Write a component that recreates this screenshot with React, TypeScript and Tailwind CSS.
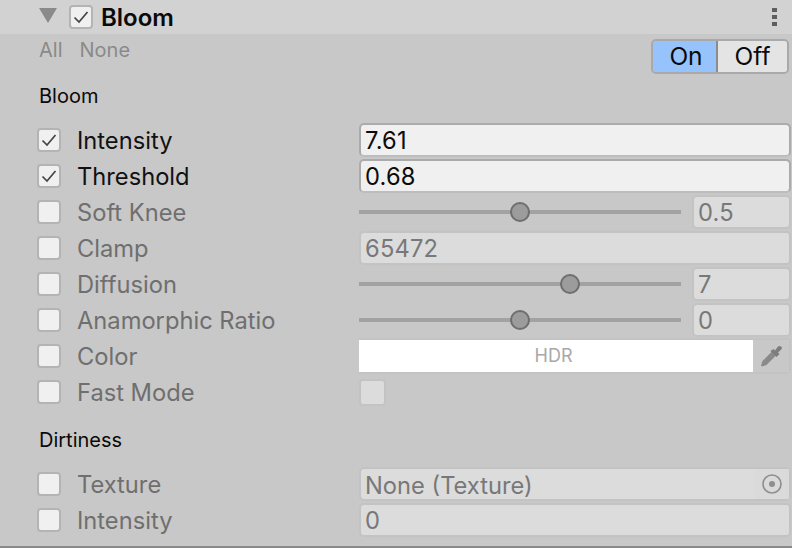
import React from "react";

const font = { fontFamily: "Inter, sans-serif" };

function Check({ on, size = "w-[24px] h-[24px]" }: { on?: boolean; size?: string }) {
  return (
    <div className={`${size} shrink-0 rounded-[4px] border-2 border-[#b4b4b4] bg-[#f0f0f0] flex items-center justify-center`}>
      {on && (
        <svg width="16" height="14" viewBox="0 0 16 14" fill="none">
          <path d="M1.5 7.5 L6 12 L14.5 2" stroke="#444" strokeWidth="1.7" />
        </svg>
      )}
    </div>
  );
}

function Row({ on, label, children }: { on?: boolean; label: string; children: React.ReactNode }) {
  return (
    <div className="h-[36px] flex items-center pl-[37px] pr-[1px]">
      <Check on={on} />
      <div className={`w-[298px] pl-[16px] pt-[2px] text-[23.7px] leading-[36px] shrink-0 ${on ? "text-[#111111]" : "text-[#6f6f6f]"}`}>{label}</div>
      <div className="flex-1 min-w-0 flex items-center">{children}</div>
    </div>
  );
}

function Field({ value, active, className = "" }: { value: string; active?: boolean; className?: string }) {
  return (
    <div
      className={`h-[34px] rounded-[5px] pl-[4px] text-[23.7px] tracking-[0.2px] leading-[31px] border-2 ${
        active ? "bg-[#f0f0f0] border-[#ababab] border-b-[#bdbdbd] text-[#0c0c0c]" : "bg-[#dcdcdc] border-[#c3c3c3] text-[#787878]"
      } ${className}`}
    >
      {value}
    </div>
  );
}

function Slider({ value, pos }: { value: string; pos: string }) {
  return (
    <>
      <div className="relative w-[322px] h-[4px] bg-[#a2a2a2] shrink-0">
        <div className={`absolute top-[-8px] ${pos} w-[20px] h-[20px] rounded-full bg-[#9c9c9c] border-2 border-[#6e6e6e]`} />
      </div>
      <Field value={value} className="ml-[11px] flex-1" />
    </>
  );
}

export default function App() {
  return (
    <div style={font} className="w-[792px] h-[548px] bg-[#c8c8c8] flex flex-col overflow-hidden">
      <div className="h-[34px] shrink-0 bg-[#d2d2d2] flex items-center pl-[39px] pr-[15px]">
        <svg width="18" height="15" viewBox="0 0 18 15" className="shrink-0 mb-[4px]">
          <path d="M0 0 H18 L9 15 Z" fill="#8a8a8a" />
        </svg>
        <div className="ml-[12px]">
          <Check on />
        </div>
        <div className="ml-[8px] pt-[2px] text-[24px] font-semibold text-[#0a0a0a] leading-[34px]">Bloom</div>
        <div className="ml-auto flex flex-col gap-[3px]">
          <div className="w-[5px] h-[4px] bg-[#5e5e5e]" />
          <div className="w-[5px] h-[4px] bg-[#5e5e5e]" />
          <div className="w-[5px] h-[4px] bg-[#5e5e5e]" />
        </div>
      </div>

      <div className="flex items-start h-[44px] pt-[5px] pl-[39px] pr-[3px] shrink-0">
        <div className="flex gap-[17px] text-[20px] leading-[24px] text-[#8a8a8a] mt-[-1px]">
          <span>All</span>
          <span>None</span>
        </div>
        <div className="ml-auto flex h-[35px] w-[138px] text-[24.5px] text-[#0a0a0a] rounded-[5px] border-2 border-[#a9a9a9] overflow-hidden">
          <div className="w-[65px] pl-[3px] bg-[#96c3fb] border-r-2 border-[#8c8c8c] flex items-center justify-center">On</div>
          <div className="flex-1 bg-[#e4e4e4] flex items-center justify-center">Off</div>
        </div>
      </div>

      <div className="h-[44px] pl-[39px] text-[20px] leading-[36px] text-[#0a0a0a] shrink-0">Bloom</div>

      <Row on label="Intensity"><Field active value="7.61" className="flex-1" /></Row>
      <Row on label="Threshold"><Field active value="0.68" className="flex-1" /></Row>
      <Row label="Soft Knee"><Slider value="0.5" pos="left-[151px]" /></Row>
      <Row label="Clamp"><Field value="65472" className="flex-1" /></Row>
      <Row label="Diffusion"><Slider value="7" pos="left-[201px]" /></Row>
      <Row label="Anamorphic Ratio"><Slider value="0" pos="left-[151px]" /></Row>
      <Row label="Color">
        <div className="flex-1 h-[36px] flex rounded-r-[5px] border-y-2 border-r-2 border-[#c3c3c3]">
          <div className="w-[394px] pr-[5px] bg-white text-center text-[18px] leading-[32px] text-[#a8a8a8]">HDR</div>
          <div className="flex-1 bg-[#c8c8c8] flex items-center justify-center">
            <svg width="24" height="24" viewBox="0 0 24 24">
              <path d="M13 7.5 L3.5 17 L2 21.5 L3 22.5 L7.5 21 L17 11.5 Z" fill="#8a8a8a" />
              <path d="M11.5 7 L14.5 5 L16 6.5 L19 2.5 Q22 1 23 4 Q23 5 19 8.5 L20.5 10 L17.5 13 Z" fill="#7d7d7d" />
            </svg>
          </div>
        </div>
      </Row>
      <Row label="Fast Mode">
        <div className="w-[27px] h-[27px] rounded-[4px] bg-[#dcdcdc] border-2 border-[#c3c3c3]" />
      </Row>

      <div className="h-[56px] pl-[39px] pt-[12px] text-[20px] leading-[36px] text-[#0a0a0a] shrink-0">Dirtiness</div>

      <Row label="Texture">
        <div className="flex-1 h-[34px] flex rounded-[5px] bg-[#dcdcdc] border-2 border-[#c3c3c3] text-[23.7px] leading-[33px] text-[#787878] pl-[4px]">
          <div className="flex-1">None (Texture)</div>
          <div className="w-[35px] flex items-center justify-center bg-[#dadada]">
            <svg width="20" height="20" viewBox="0 0 20 20">
              <circle cx="10" cy="10" r="9" fill="none" stroke="#8e8e8e" strokeWidth="1.6" />
              <circle cx="10" cy="10" r="3" fill="#8e8e8e" />
            </svg>
          </div>
        </div>
      </Row>
      <Row label="Intensity"><Field value="0" className="flex-1" /></Row>

      <div className="mt-auto h-[2px] bg-[#8a8a8a] shrink-0" />
    </div>
  );
}
